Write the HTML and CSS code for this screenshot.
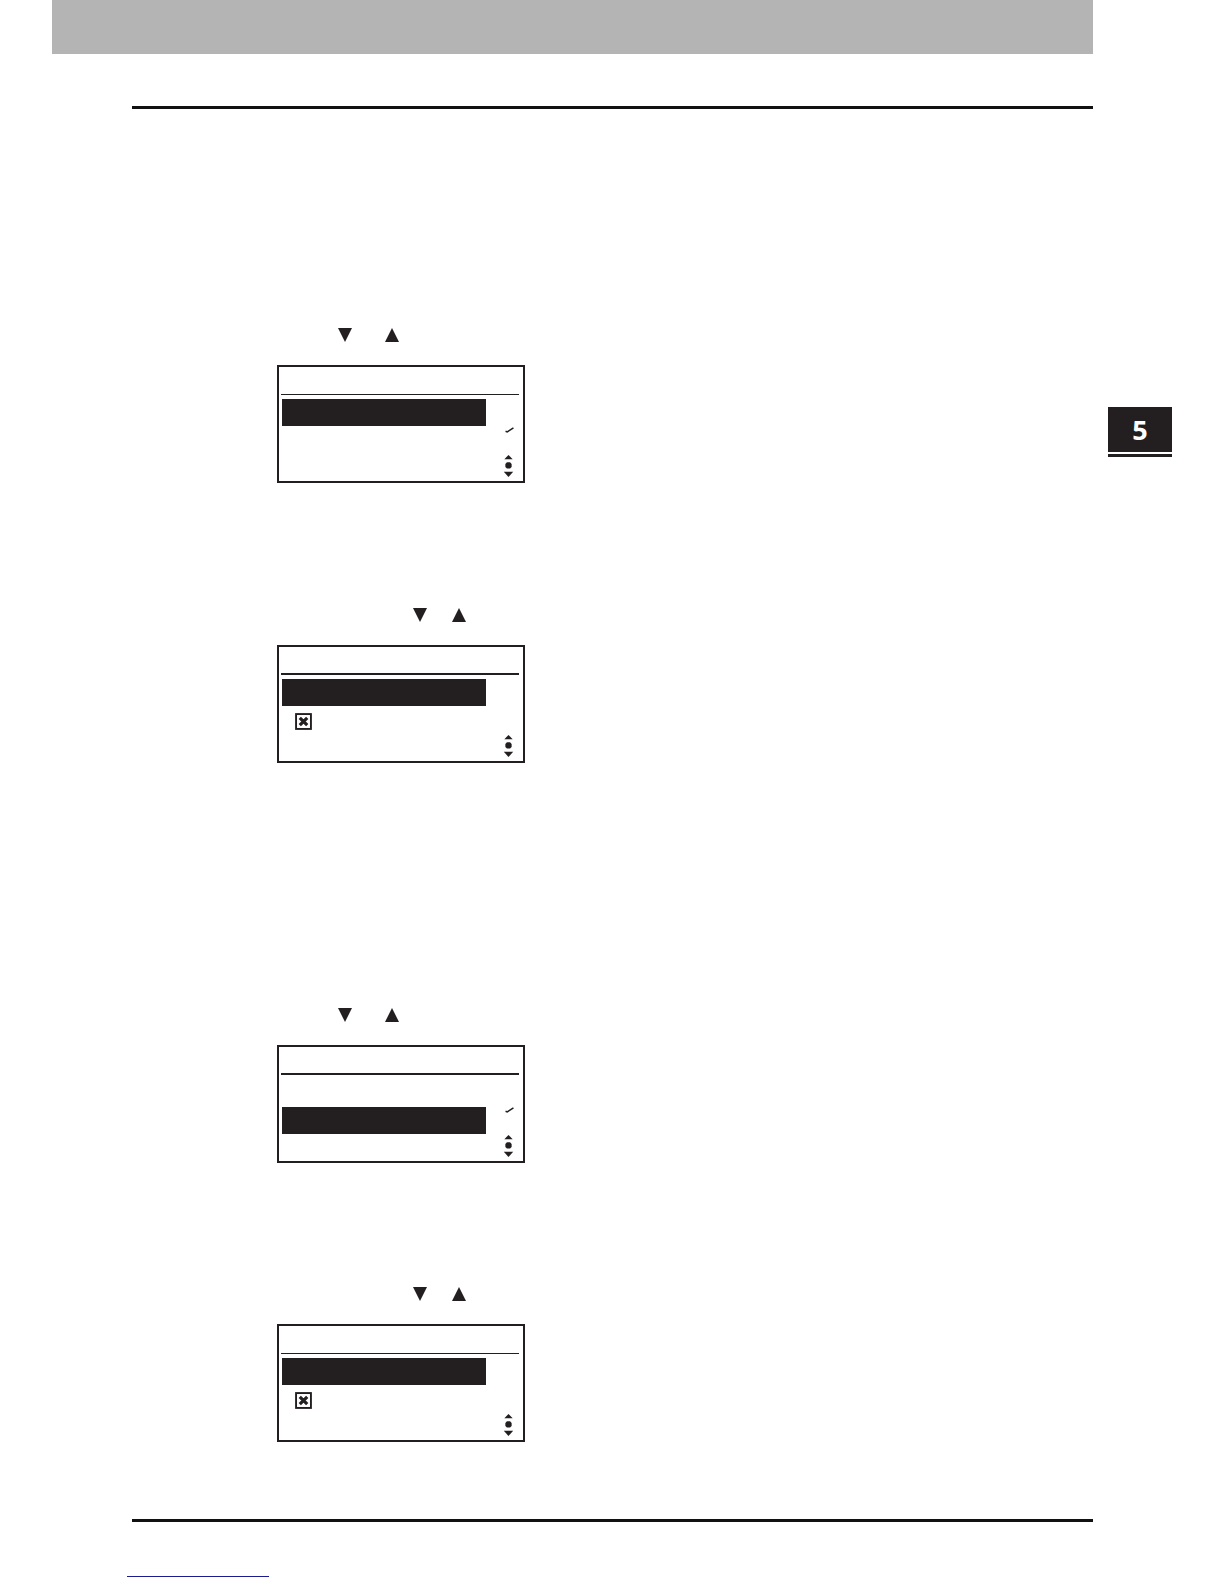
FILE: index.html
```html
<!DOCTYPE html>
<html lang="en">
<head>
<meta charset="utf-8">
<title>Manual page</title>
<link rel="stylesheet" href="styles.css">
</head>
<body>
<div class="page">
  <div class="header-band"></div>
  <div class="top-rule"></div>

  <div class="content">
    <div class="main">

      <section class="step step-1">
        <div class="keys keys-a">
          <svg class="tri" viewBox="0 0 14 14"><polygon points="0,0 14,0 7,14"/></svg>
          <svg class="tri" viewBox="0 0 14 14"><polygon points="7,0 14,14 0,14"/></svg>
        </div>
        <div class="lcd">
          <div class="lcd-title"></div>
          <div class="lcd-rule"></div>
          <div class="lcd-body">
            <div class="row"><div class="item item-sel"></div><div class="mark"></div></div>
            <div class="row"><div class="item"></div><div class="mark"><svg class="check" viewBox="0 0 8 5"><path d="M0.5 3.6 L2 4.2 L7.5 0.6"/></svg></div></div>
            <div class="row row-last"><div class="item"></div><div class="mark"><svg class="scroll" viewBox="0 0 10 21"><polygon points="5,0 9,4 1,4"/><polygon points="3.5,7 6.5,7 8,8.5 8,11.5 6.5,13 3.5,13 2,11.5 2,8.5"/><polygon points="0.5,16 9.5,16 5,21"/></svg></div></div>
          </div>
        </div>
      </section>

      <section class="step step-2">
        <div class="keys keys-b">
          <svg class="tri" viewBox="0 0 14 14"><polygon points="0,0 14,0 7,14"/></svg>
          <svg class="tri" viewBox="0 0 14 14"><polygon points="7,0 14,14 0,14"/></svg>
        </div>
        <div class="lcd">
          <div class="lcd-title"></div>
          <div class="lcd-rule lcd-rule-bold"></div>
          <div class="lcd-body">
            <div class="row"><div class="item item-sel"></div><div class="mark"></div></div>
            <div class="row"><div class="item"><svg class="xbox" viewBox="0 0 16 16"><rect x="1" y="1" width="14" height="14"/><path d="M4.5 4.5 L11.5 11.5 M11.5 4.5 L4.5 11.5"/></svg></div><div class="mark"></div></div>
            <div class="row row-last"><div class="item"></div><div class="mark"><svg class="scroll" viewBox="0 0 10 21"><polygon points="5,0 9,4 1,4"/><polygon points="3.5,7 6.5,7 8,8.5 8,11.5 6.5,13 3.5,13 2,11.5 2,8.5"/><polygon points="0.5,16 9.5,16 5,21"/></svg></div></div>
          </div>
        </div>
      </section>

      <section class="step step-3">
        <div class="keys keys-a">
          <svg class="tri" viewBox="0 0 14 14"><polygon points="0,0 14,0 7,14"/></svg>
          <svg class="tri" viewBox="0 0 14 14"><polygon points="7,0 14,14 0,14"/></svg>
        </div>
        <div class="lcd">
          <div class="lcd-title"></div>
          <div class="lcd-rule lcd-rule-bold"></div>
          <div class="lcd-body">
            <div class="row"><div class="item"></div><div class="mark"></div></div>
            <div class="row"><div class="item item-sel"></div><div class="mark"><svg class="check" viewBox="0 0 8 5"><path d="M0.5 3.6 L2 4.2 L7.5 0.6"/></svg></div></div>
            <div class="row row-last"><div class="item"></div><div class="mark"><svg class="scroll" viewBox="0 0 10 21"><polygon points="5,0 9,4 1,4"/><polygon points="3.5,7 6.5,7 8,8.5 8,11.5 6.5,13 3.5,13 2,11.5 2,8.5"/><polygon points="0.5,16 9.5,16 5,21"/></svg></div></div>
          </div>
        </div>
      </section>

      <section class="step step-4">
        <div class="keys keys-b">
          <svg class="tri" viewBox="0 0 14 14"><polygon points="0,0 14,0 7,14"/></svg>
          <svg class="tri" viewBox="0 0 14 14"><polygon points="7,0 14,14 0,14"/></svg>
        </div>
        <div class="lcd">
          <div class="lcd-title"></div>
          <div class="lcd-rule"></div>
          <div class="lcd-body">
            <div class="row"><div class="item item-sel"></div><div class="mark"></div></div>
            <div class="row"><div class="item"><svg class="xbox" viewBox="0 0 16 16"><rect x="1" y="1" width="14" height="14"/><path d="M4.5 4.5 L11.5 11.5 M11.5 4.5 L4.5 11.5"/></svg></div><div class="mark"></div></div>
            <div class="row row-last"><div class="item"></div><div class="mark"><svg class="scroll" viewBox="0 0 10 21"><polygon points="5,0 9,4 1,4"/><polygon points="3.5,7 6.5,7 8,8.5 8,11.5 6.5,13 3.5,13 2,11.5 2,8.5"/><polygon points="0.5,16 9.5,16 5,21"/></svg></div></div>
          </div>
        </div>
      </section>

    </div>

    <aside class="side">
      <div class="tab"><span class="tab-num">5</span></div>
      <div class="tab-rule"></div>
    </aside>
  </div>

  <div class="bottom-rule"></div>
  <a class="footer-link" href="#"></a>
</div>
</body>
</html>
```

FILE: styles.css
```css
html, body {
  margin: 0;
  padding: 0;
  background: #ffffff;
}

body {
  font-family: "Open Sans", "Liberation Sans", sans-serif;
  color: #231f20;
}

.page {
  width: 1224px;
  height: 1584px;
  overflow: hidden;
}

.header-band {
  margin-left: 52px;
  width: 1041px;
  height: 54px;
  background: #b4b4b4;
}

.top-rule {
  margin: 52px 0 0 132px;
  width: 961px;
  height: 3px;
  background: #111111;
}

.content {
  display: flex;
  gap: 15px;
  margin-left: 132px;
}

.main {
  width: 961px;
}

.step-1 { padding-top: 219px; }
.step-2 { padding-top: 125px; }
.step-3 { padding-top: 245px; }
.step-4 { padding-top: 124px; }

.keys {
  display: flex;
  height: 14px;
}

.keys-a {
  padding-left: 206px;
  gap: 33px;
}

.keys-b {
  padding-left: 281px;
  gap: 25px;
}

.tri {
  width: 14px;
  height: 14px;
  display: block;
  fill: #231f20;
}

.lcd {
  margin: 23px 0 0 145px;
  width: 248px;
  height: 118px;
  box-sizing: border-box;
  border: 2px solid #231f20;
  padding: 0 4px 0 2px;
  overflow: hidden;
}

.lcd-title {
  height: 27px;
}

.lcd-rule {
  height: 1px;
  background: #231f20;
}

.lcd-rule-bold {
  height: 2px;
  margin-top: -1px;
}

.lcd-body {
  padding-top: 4px;
}

.row {
  display: flex;
  height: 28px;
}

.row-last {
  height: 26px;
}

.item {
  margin-left: 1px;
  width: 204px;
  height: 27px;
  box-sizing: border-box;
  padding: 6px 0 0 13px;
}

.item-sel {
  background: #231f20;
}

.mark {
  flex: 1;
}

.check {
  display: block;
  width: 9px;
  height: 6px;
  margin: 0 0 0 19px;
  fill: none;
  stroke: #231f20;
  stroke-width: 1.4;
}

.scroll {
  display: block;
  width: 11px;
  height: 22px;
  margin: 0 0 0 17px;
  fill: #231f20;
}

.xbox {
  display: block;
  width: 17px;
  height: 17px;
}

.xbox rect {
  fill: none;
  stroke: #231f20;
  stroke-width: 1.8;
}

.xbox path {
  stroke: #231f20;
  stroke-width: 3;
}

.side {
  width: 64px;
  padding-top: 298px;
}

.tab {
  height: 45px;
  background: #231f20;
  display: flex;
  align-items: center;
  justify-content: center;
}

.tab-num {
  color: #ffffff;
  font-family: "Open Sans", "Liberation Sans", sans-serif;
  font-weight: 700;
  font-size: 27px;
  line-height: 1;
}

.tab-rule {
  margin-top: 2px;
  height: 3px;
  background: #231f20;
}

.bottom-rule {
  margin: 77px 0 0 132px;
  width: 961px;
  height: 3px;
  background: #111111;
}

.footer-link {
  display: block;
  margin: 54px 0 0 127px;
  width: 142px;
  height: 1px;
  background: #1c1c8e;
}
```
